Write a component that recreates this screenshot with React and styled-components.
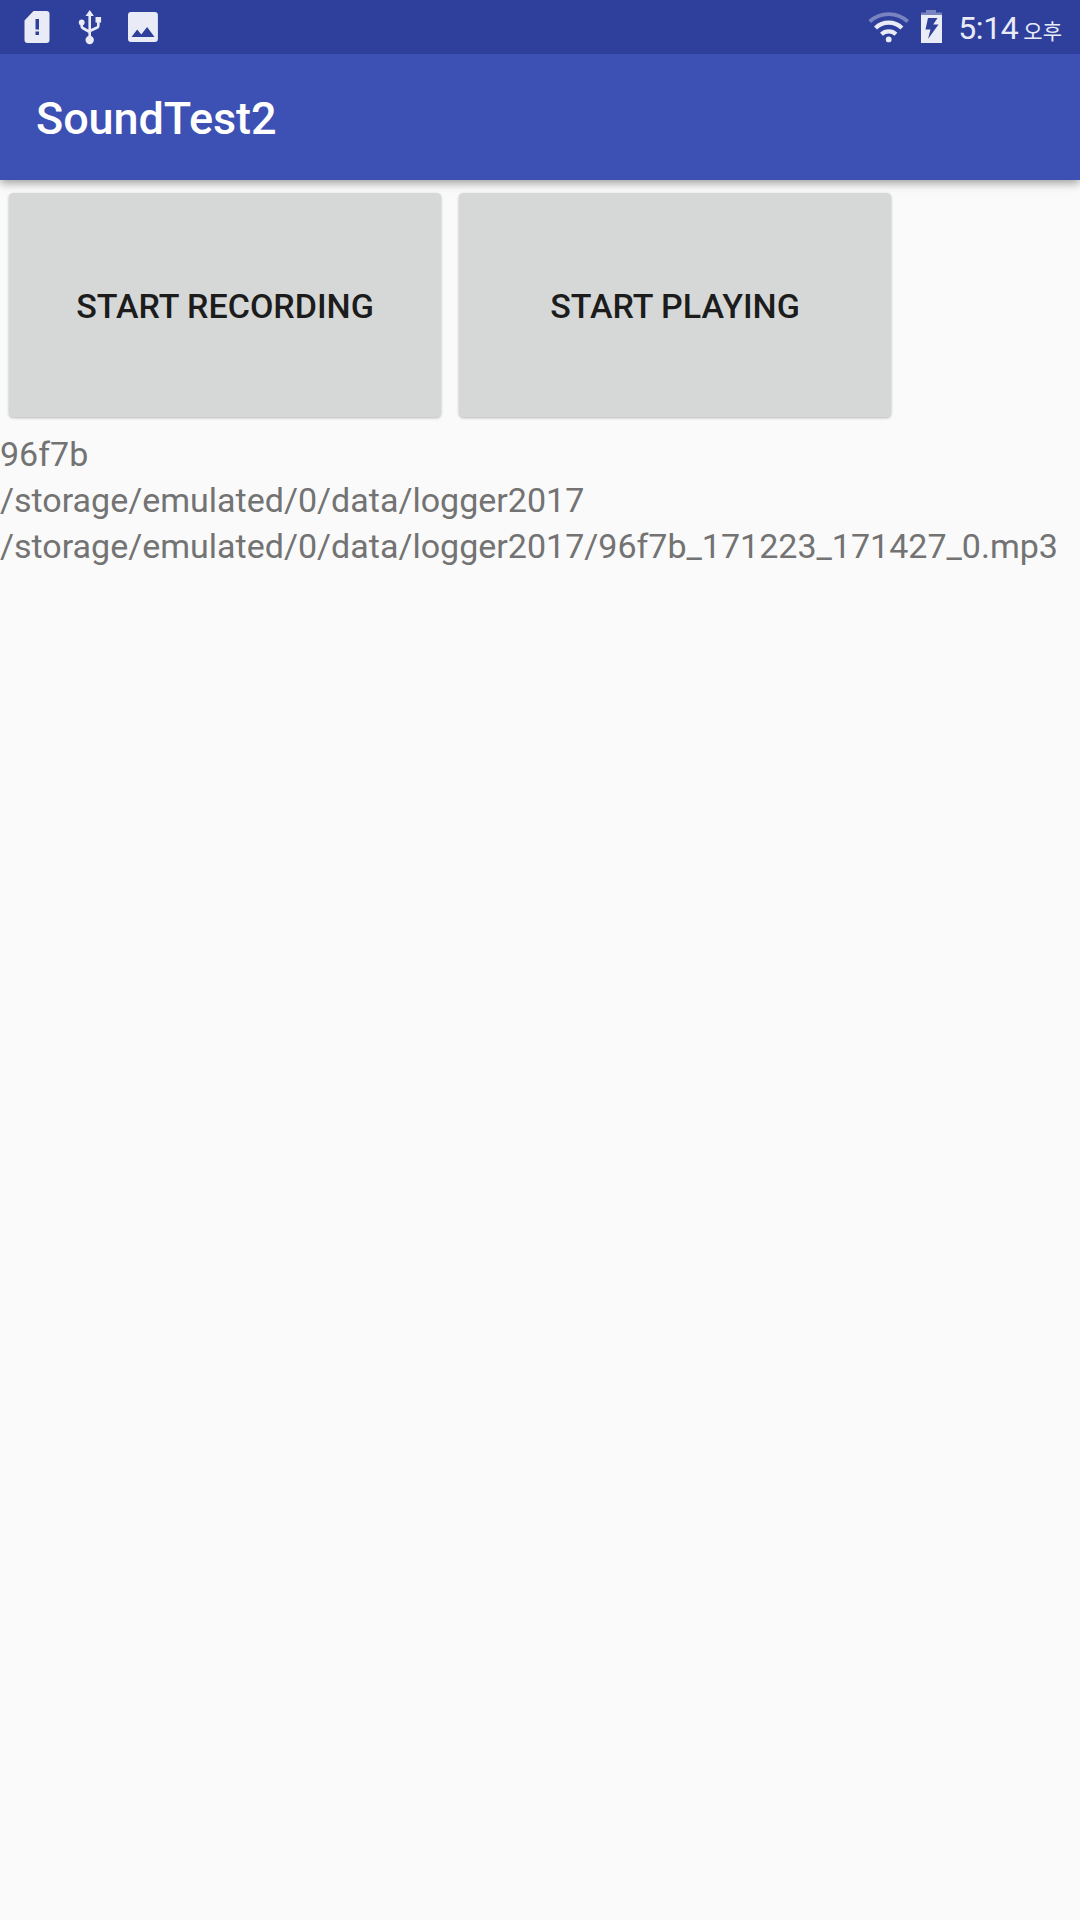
import React from "react";
import styled, { createGlobalStyle } from "styled-components";

const GlobalStyle = createGlobalStyle`
  *, *::before, *::after { box-sizing: border-box; }
  body { margin: 0; background: #fafafa; font-family: Roboto, "Noto Sans CJK KR", sans-serif; }
`;

const Screen = styled.div`
  display: flex;
  flex-direction: column;
  width: 1080px;
  min-height: 1920px;
  background: #fafafa;
`;

const StatusBar = styled.header`
  display: flex;
  justify-content: space-between;
  height: 54px;
  padding: 0 18px 0 18px;
  background: #2e3f9c;
  color: #e9ebf6;
`;

const StatusGroup = styled.div`
  display: flex;
  align-items: center;
`;

const Icon = styled.svg`
  display: block;
  flex: none;
  width: ${(p) => p.$width}px;
  height: 54px;
  fill: currentColor;
`;

const Clock = styled.time`
  display: flex;
  align-items: baseline;
  margin-left: 7px;
  padding-top: 2px;
  font-size: 32px;
  letter-spacing: -0.4px;
  line-height: 54px;
`;

const Meridiem = styled.span`
  margin-left: 5px;
  font-family: "Noto Sans CJK KR", sans-serif;
  font-size: 21px;
  font-weight: 400;
  letter-spacing: 0;
  line-height: 1;
`;

const AppBar = styled.div`
  display: flex;
  align-items: center;
  height: 126px;
  padding: 4px 36px 0;
  background: #3d50b3;
  box-shadow: 0 3px 9px rgba(0, 0, 0, 0.38);
  clip-path: inset(0 0 -20px 0);
`;

const Title = styled.h1`
  margin: 0;
  color: #fff;
  font-size: 45px;
  font-weight: 500;
  letter-spacing: -0.1px;
  line-height: 54px;
`;

const ButtonRow = styled.div`
  display: flex;
  gap: 18px;
  padding: 13px 9px 13.5px;
`;

const ActionButton = styled.button`
  width: 432px;
  height: 224px;
  padding: 2px 0 0;
  border: 0;
  border-radius: 4.5px;
  background: #d6d8d7;
  box-shadow: 0 1px 3px rgba(0, 0, 0, 0.28);
  color: #1c1c1c;
  font: 500 34px/40px Roboto, sans-serif;
  text-transform: uppercase;
`;

const Output = styled.main`
  display: flex;
  flex-direction: column;
  color: #737373;
  font-size: 34px;
  line-height: 46px;
  white-space: nowrap;
`;

const Line = styled.div``;

const lines = [
  "96f7b",
  "/storage/emulated/0/data/logger2017",
  "/storage/emulated/0/data/logger2017/96f7b_171223_171427_0.mp3",
];

export default function App() {
  return (
    <>
      <GlobalStyle />
      <Screen>
        <StatusBar>
          <StatusGroup>
            <Icon $width={52} viewBox="18 0 52 54">
              <path fillRule="evenodd" d="M33.500 11h13q3 0 3 3v26q0 3-3 3h-19q-3 0-3-3V20.500ZM35.500 19v10.500h3.500V19ZM35.500 31.500V35h3.500v-3.500Z" />
            </Icon>
            <Icon $width={53} viewBox="70 0 53 54">
              <path d="M89.700 10l4.200 6h-8.400z" />
              <circle cx="89.700" cy="40" r="4.200" />
              <circle cx="81.700" cy="22.500" r="2.900" />
              <path d="M95.500 17h5.600v5.600h-5.600z" />
              <path d="M89.700 14v25M81.700 23v3.500q0 1 1 1.500l7 4M98.300 22v4q0 1-1 1.500l-7.600 3.500" fill="none" stroke="currentColor" strokeWidth="2.600" />
            </Icon>
            <Icon $width={40} viewBox="123 0 40 54">
              <path fillRule="evenodd" d="M131 12h23.700q3.200 0 3.200 3.200v23.600q0 3.200-3.200 3.200H131q-3 0-3-3.200V15.200q0-3.200 3-3.200ZM131.500 37h23l-7.400-10-5.800 7.500-4.100-5Z" />
            </Icon>
          </StatusGroup>
          <StatusGroup>
            <Icon $width={46} viewBox="868 0 46 54">
              <g fill="none" stroke="currentColor" strokeWidth="3.800">
                <path d="M869.700 21.500a28 28 0 0 1 38 0" opacity=".4" />
                <path d="M875.500 28a19 19 0 0 1 26.400 0" strokeWidth="4.300" />
                <path d="M881.500 34.300a10.500 10.500 0 0 1 14.400 0" strokeWidth="4.300" />
              </g>
              <circle cx="888.700" cy="39.400" r="2.900" />
            </Icon>
            <Icon $width={37} viewBox="914 0 37 54">
              <path d="M926 10h10v2.500h6V15h-21v-2.500h5z" opacity=".4" />
              <path fillRule="evenodd" d="M921 15h21v28h-21ZM928 18l-2.500 11.500h5l-2.500 9.500 10.500-14.500h-5.300l4.300-6.500Z" />
            </Icon>
            <Clock>
              5:14
              <Meridiem>오후</Meridiem>
            </Clock>
          </StatusGroup>
        </StatusBar>
        <AppBar>
          <Title>SoundTest2</Title>
        </AppBar>
        <ButtonRow>
          <ActionButton>Start recording</ActionButton>
          <ActionButton>Start playing</ActionButton>
        </ButtonRow>
        <Output>
          {lines.map((line) => (
            <Line key={line}>{line}</Line>
          ))}
        </Output>
      </Screen>
    </>
  );
}
